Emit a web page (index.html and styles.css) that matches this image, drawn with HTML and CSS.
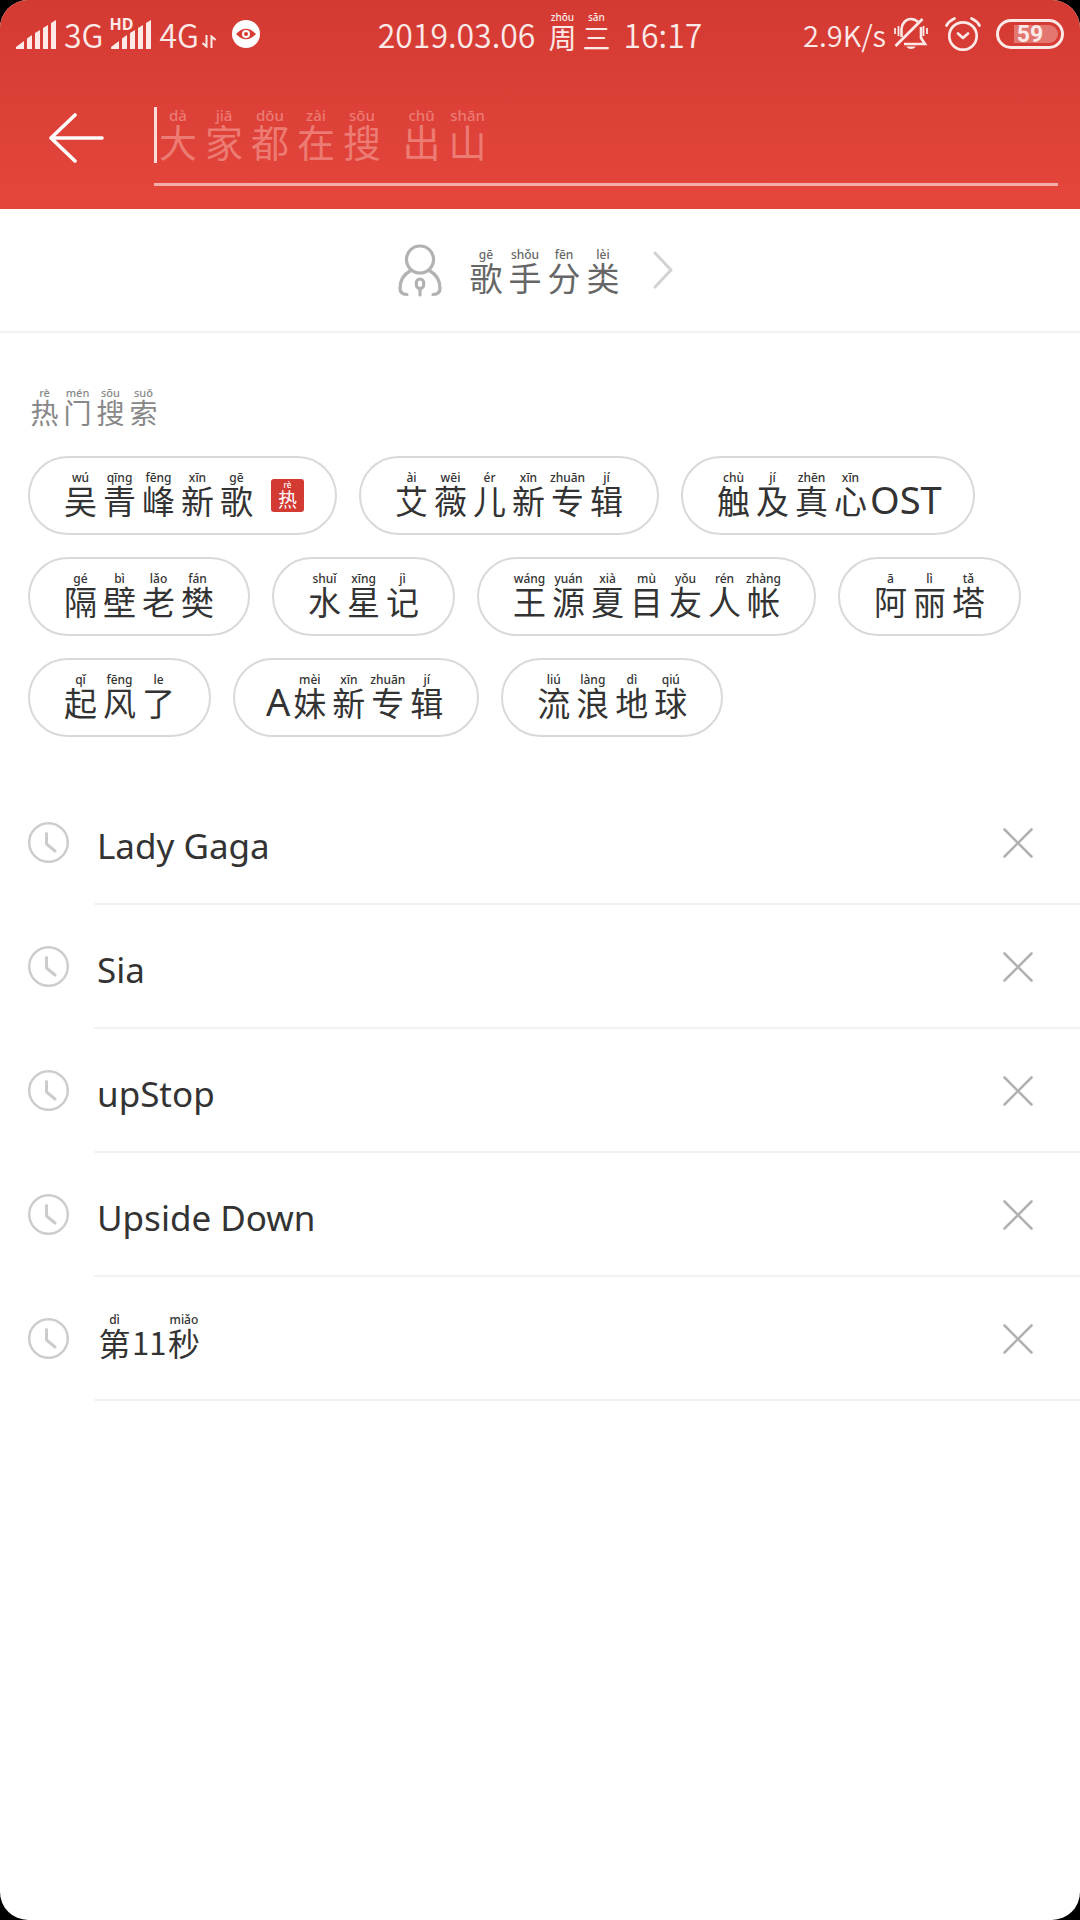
FILE: index.html
```html
<!DOCTYPE html>
<html lang="zh-CN">
<head>
<meta charset="utf-8">
<meta name="viewport" content="width=device-width, initial-scale=1">
<title>搜索</title>
<link rel="stylesheet" href="styles.css">
</head>
<body>
<svg class="defs" width="0" height="0" aria-hidden="true">
  <symbol id="signal" viewBox="0 0 40 29">
    <path d="M0 29v-2l8-6v8zM11 29V18.500l5-3.500v14zM19 29V13l5-3v19zM27 29V8l5-3v24zM35 29V3l5-3v29z" fill="currentColor"/>
  </symbol>
  <symbol id="clock" viewBox="0 0 41 41">
    <circle cx="20.500" cy="20.500" r="19.300" fill="none" stroke="#ccc" stroke-width="2.400"/>
    <path d="M18.500 11.500V22l8.500 7" fill="none" stroke="#ccc" stroke-width="3" stroke-linecap="round" stroke-linejoin="round"/>
  </symbol>
  <symbol id="cross" viewBox="0 0 30 30">
    <path d="M1.500 1.500l27 27M28.500 1.500l-27 27" fill="none" stroke="#b2b2b2" stroke-width="2.600" stroke-linecap="round"/>
  </symbol>
</svg>
<div class="app">
  <header class="header">
    <div class="status">
      <div class="status-left">
        <svg class="bars" width="40" height="29"><use href="#signal"/></svg>
        <span class="net">3G</span>
        <span class="hd-signal"><svg class="bars" width="40" height="29"><use href="#signal"/></svg><b class="hd">HD</b></span>
        <span class="net">4G</span>
        <svg class="updown" width="14" height="13" viewBox="0 0 14 13"><path d="M4.500 0v11.500L.5 8M9.500 13V1.500L13.500 5" fill="none" stroke="currentColor" stroke-width="2"/></svg>
        <svg class="eye" width="28" height="28" viewBox="0 0 28 28"><circle cx="14" cy="14" r="14" fill="#fff"/><path d="M4 14Q14 3.500 24 14Q14 24.500 4 14z" fill="#d73b33"/><circle cx="14" cy="14" r="3" fill="none" stroke="#fff" stroke-width="2"/></svg>
      </div>
      <div class="status-time"><span>2019.03.06</span><span class="pinyin"><ruby>周<rt>zhōu</rt></ruby><ruby>三<rt>sān</rt></ruby></span><span>16:17</span></div>
      <div class="status-right">
        <span class="net speed">2.9K/s</span>
        <svg class="bell" width="34" height="34" viewBox="0 0 34 34" fill="none" stroke="currentColor" stroke-width="2.600">
          <path d="M7.500 20V12C8 6 12 2 17 2c3 0 5 1 7 3M27 10v11l4 6H10"/>
          <path d="M1.500 29L28.500 2" stroke-width="2.800"/>
          <path d="M1 11v6M4.500 9v10M33 11v6M29.500 9v10" stroke-width="1.800"/>
          <path d="M12 29.500h10q-5 5-10 0z" fill="currentColor" stroke="none"/>
        </svg>
        <svg class="alarm" width="36" height="34" viewBox="0 0 36 34" fill="none" stroke="currentColor" stroke-width="2.700" stroke-linecap="round" stroke-linejoin="round">
          <circle cx="18" cy="19" r="13.700"/><path d="M13 16.500l5 4.500 5-4.500"/><path d="M1.500 8.500Q4 4 9.500 1.500M34.500 8.500Q32 4 26.500 1.500"/>
        </svg>
        <span class="battery"><span class="battery-level">59</span></span>
      </div>
    </div>
    <div class="search">
      <button class="back" type="button" aria-label="返回">
        <svg width="56" height="50" viewBox="0 0 56 50"><path d="M27 2L3 25l24 23M3 25h51" fill="none" stroke="#fff" stroke-width="3.600" stroke-linecap="round" stroke-linejoin="round"/></svg>
      </button>
      <div class="field">
        <input class="field-input" id="q" type="text" autocomplete="off">
        <label class="field-hint pinyin" for="q"><i class="caret"></i><ruby>大<rt>dà</rt></ruby><ruby>家<rt>jiā</rt></ruby><ruby>都<rt>dōu</rt></ruby><ruby>在<rt>zài</rt></ruby><ruby>搜<rt>sōu</rt></ruby>&nbsp;<ruby>出<rt>chū</rt></ruby><ruby>山<rt>shān</rt></ruby></label>
      </div>
    </div>
  </header>
  <main>
    <a class="singers" href="#singers">
      <svg width="44" height="53" viewBox="0 0 44 53" fill="none" stroke="#b2b2b2" stroke-width="3.200" stroke-linecap="round">
        <circle cx="22" cy="15.500" r="13.500"/>
        <path d="M12 27C5 31 2 38 2 44q0 6.500 7 6.500M32 27c7 4 10 11 10 17q0 6.500-7 6.500"/>
        <rect x="18.300" y="35" width="7.400" height="9.500" rx="3.700"/><path d="M22 44.500V51"/>
      </svg>
      <span class="pinyin"><ruby>歌<rt>gē</rt></ruby><ruby>手<rt>shǒu</rt></ruby><ruby>分<rt>fēn</rt></ruby><ruby>类<rt>lèi</rt></ruby></span>
      <svg class="chevron" width="20" height="38" viewBox="0 0 20 38"><path d="M2 2l16 17L2 36" fill="none" stroke="#d2d2d2" stroke-width="3" stroke-linecap="round" stroke-linejoin="round"/></svg>
    </a>
    <section class="hot">
      <h2 class="hot-title pinyin"><ruby>热<rt>rè</rt></ruby><ruby>门<rt>mén</rt></ruby><ruby>搜<rt>sōu</rt></ruby><ruby>索<rt>suǒ</rt></ruby></h2>
      <div class="chips">
        <button class="chip" type="button"><span class="pinyin"><ruby>吴<rt>wú</rt></ruby><ruby>青<rt>qīng</rt></ruby><ruby>峰<rt>fēng</rt></ruby><ruby>新<rt>xīn</rt></ruby><ruby>歌<rt>gē</rt></ruby></span><span class="badge pinyin"><ruby>热<rt>rè</rt></ruby></span></button>
        <button class="chip" type="button"><span class="pinyin"><ruby>艾<rt>ài</rt></ruby><ruby>薇<rt>wēi</rt></ruby><ruby>儿<rt>ér</rt></ruby><ruby>新<rt>xīn</rt></ruby><ruby>专<rt>zhuān</rt></ruby><ruby>辑<rt>jí</rt></ruby></span></button>
        <button class="chip" type="button"><span class="pinyin"><ruby>触<rt>chù</rt></ruby><ruby>及<rt>jí</rt></ruby><ruby>真<rt>zhēn</rt></ruby><ruby>心<rt>xīn</rt></ruby>OST</span></button>
        <button class="chip" type="button"><span class="pinyin"><ruby>隔<rt>gé</rt></ruby><ruby>壁<rt>bì</rt></ruby><ruby>老<rt>lǎo</rt></ruby><ruby>樊<rt>fán</rt></ruby></span></button>
        <button class="chip" type="button"><span class="pinyin"><ruby>水<rt>shuǐ</rt></ruby><ruby>星<rt>xīng</rt></ruby><ruby>记<rt>jì</rt></ruby></span></button>
        <button class="chip" type="button"><span class="pinyin"><ruby>王<rt>wáng</rt></ruby><ruby>源<rt>yuán</rt></ruby><ruby>夏<rt>xià</rt></ruby><ruby>目<rt>mù</rt></ruby><ruby>友<rt>yǒu</rt></ruby><ruby>人<rt>rén</rt></ruby><ruby>帐<rt>zhàng</rt></ruby></span></button>
        <button class="chip" type="button"><span class="pinyin"><ruby>阿<rt>ā</rt></ruby><ruby>丽<rt>lì</rt></ruby><ruby>塔<rt>tǎ</rt></ruby></span></button>
        <button class="chip" type="button"><span class="pinyin"><ruby>起<rt>qǐ</rt></ruby><ruby>风<rt>fēng</rt></ruby><ruby>了<rt>le</rt></ruby></span></button>
        <button class="chip" type="button"><span class="pinyin">A<ruby>妹<rt>mèi</rt></ruby><ruby>新<rt>xīn</rt></ruby><ruby>专<rt>zhuān</rt></ruby><ruby>辑<rt>jí</rt></ruby></span></button>
        <button class="chip" type="button"><span class="pinyin"><ruby>流<rt>liú</rt></ruby><ruby>浪<rt>làng</rt></ruby><ruby>地<rt>dì</rt></ruby><ruby>球<rt>qiú</rt></ruby></span></button>
      </div>
    </section>
    <ul class="history">
      <li class="item"><svg class="clock" width="41" height="41"><use href="#clock"/></svg><div class="item-body"><a class="term" href="#1">Lady Gaga</a><button class="remove" type="button" aria-label="删除"><svg width="30" height="30"><use href="#cross"/></svg></button></div></li>
      <li class="item"><svg class="clock" width="41" height="41"><use href="#clock"/></svg><div class="item-body"><a class="term" href="#2">Sia</a><button class="remove" type="button" aria-label="删除"><svg width="30" height="30"><use href="#cross"/></svg></button></div></li>
      <li class="item"><svg class="clock" width="41" height="41"><use href="#clock"/></svg><div class="item-body"><a class="term" href="#3">upStop</a><button class="remove" type="button" aria-label="删除"><svg width="30" height="30"><use href="#cross"/></svg></button></div></li>
      <li class="item"><svg class="clock" width="41" height="41"><use href="#clock"/></svg><div class="item-body"><a class="term" href="#4">Upside Down</a><button class="remove" type="button" aria-label="删除"><svg width="30" height="30"><use href="#cross"/></svg></button></div></li>
      <li class="item"><svg class="clock" width="41" height="41"><use href="#clock"/></svg><div class="item-body"><a class="term pinyin" href="#5"><ruby>第<rt>dì</rt></ruby><span class="digits">11</span><ruby>秒<rt>miǎo</rt></ruby></a><button class="remove" type="button" aria-label="删除"><svg width="30" height="30"><use href="#cross"/></svg></button></div></li>
    </ul>
  </main>
</div>
</body>
</html>
```
FILE: styles.css
```css
* { box-sizing: border-box; }

body {
  margin: 0;
  background: #000;
  color: #333;
  font-family: "Noto Sans", "Noto Sans CJK SC", sans-serif;
}

button {
  margin: 0;
  padding: 0;
  border: 0;
  background: none;
  color: inherit;
  font: inherit;
}

a { color: inherit; text-decoration: none; }
svg { display: block; flex: none; }
.defs { position: absolute; }

.app {
  min-height: 100vh;
  overflow: hidden;
  border-radius: 28px;
  background: #fff;
}

/* Characters with their reading above; the reading rises out of the line box. */
.pinyin { display: flex; align-items: center; white-space: pre; }
.pinyin ruby {
  display: flex;
  flex-direction: column-reverse;
  align-items: center;
  width: var(--cell);
  height: var(--line);
  font-family: "Noto Sans CJK SC", sans-serif;
  font-size: var(--glyph);
  line-height: var(--line);
}
.pinyin rt {
  display: block;
  font-family: "Noto Sans", sans-serif;
  font-size: 12px;
  font-weight: 500;
  line-height: 14px;
}

.header {
  height: 209px;
  background: linear-gradient(#d33a32, #e5463c);
  color: #fff;
}

.status {
  display: grid;
  grid-template-columns: 1fr auto 1fr;
  align-items: center;
  height: 68px;
  padding: 0 16px;
  color: #fce9e8;
  font-family: "Noto Sans CJK SC", sans-serif;
  font-size: 32px;
  font-weight: 350;
  line-height: 32px;
}
.status-left, .status-right { display: flex; align-items: center; }
.status-right { justify-content: flex-end; }
.net { margin: 0 8px; }
.speed { font-size: 29px; }
.hd-signal { position: relative; }
.hd {
  position: absolute;
  top: -4px;
  left: -2px;
  font-family: "Noto Sans", sans-serif;
  font-size: 16px;
  font-weight: 700;
  line-height: 16px;
}
.updown { align-self: flex-end; margin: 0 16px 2px -5px; }
.status-time {
  --cell: 34px;
  --line: 30px;
  --glyph: 28px;
  display: flex;
  align-items: center;
  gap: 10px;
}
.status-time ruby { margin-top: 6px; font-weight: 400; }
.status-time rt { font-size: 10px; line-height: 10px; }
.alarm { margin: 0 15px 0 17px; }
.battery {
  display: flex;
  width: 68px;
  height: 30px;
  padding: 3px;
  border: 3px solid #fce9e8;
  border-radius: 15px;
}
.battery-level {
  flex: 1;
  border-radius: 9px;
  background: linear-gradient(90deg, transparent 22%, #e37770 22%);
  font-family: Roboto, sans-serif;
  font-size: 23px;
  font-weight: 700;
  line-height: 20px;
  text-align: center;
}

.search {
  display: flex;
  gap: 48px;
  padding: 32px 22px 0 48px;
}
.back { width: 58px; height: 76px; }
.field {
  display: grid;
  flex: 1;
  height: 86px;
  border-bottom: 3px solid #f5aea9;
}
.field-input, .field-hint { grid-area: 1 / 1; }
.field-input {
  width: 100%;
  border: 0;
  outline: 0;
  background: none;
  color: #fff;
  font-size: 40px;
}
.field-hint {
  --cell: 46px;
  --line: 36px;
  --glyph: 38px;
  align-self: start;
  height: 76px;
  padding-top: 6px;
  color: #ec7b74;
  font-size: 52px;
}
.field-hint rt { font-size: 15px; line-height: 16px; }
.caret { align-self: flex-start; width: 3px; height: 56px; margin: 1px -2px 0 0; background: #fbdedc; }

.singers {
  --cell: 39px;
  --line: 30px;
  --glyph: 33px;
  display: flex;
  align-items: center;
  justify-content: center;
  height: 124px;
  padding-right: 10px;
  border-bottom: 2px solid #f2f2f2;
  color: #666;
}
.singers .pinyin { padding: 13px 30px 0 25px; }

.hot { padding: 66px 28px 0; }
.hot-title {
  --cell: 33px;
  --line: 26px;
  --glyph: 28px;
  margin: 0;
  color: #888;
  font-weight: 400;
}
.hot-title rt { font-size: 11px; line-height: 12px; }

.chips {
  display: flex;
  flex-wrap: wrap;
  gap: 22px;
  margin-top: 31px;
}
.chip {
  --cell: 39px;
  --line: 30px;
  --glyph: 33px;
  display: flex;
  align-items: center;
  height: 79px;
  padding: 0 31px;
  border: 2px solid #d9d9d9;
  border-radius: 40px;
  font-size: 38px;
  line-height: 28px;
}
.chip .pinyin { align-items: flex-start; padding-top: 8px; }
.chip .badge {
  --cell: 33px;
  --line: 20px;
  --glyph: 19px;
  height: 33px;
  margin-left: 15px;
  padding-top: 10px;
  border-radius: 3px;
  background: #d33a32;
  color: #fff;
}
.badge rt { font-size: 8px; line-height: 8px; }

.history { margin: 44px 0 0; padding: 0; list-style: none; }
.item { display: flex; align-items: center; padding-left: 28px; }
.clock { margin-bottom: 2px; }
.item-body {
  display: flex;
  flex: 1;
  align-items: center;
  justify-content: space-between;
  height: 124px;
  margin-left: 25px;
  padding-right: 47px;
  border-bottom: 2px solid #f2f2f2;
}
.term {
  --cell: 35px;
  --line: 30px;
  --glyph: 32px;
  padding: 8px 0 0 3px;
  font-size: 35px;
  line-height: 28px;
}
.digits {
  font-family: "Noto Sans CJK SC", sans-serif;
  font-size: 31px;
}
.remove { width: 30px; height: 30px; margin-top: 2px; }
```
